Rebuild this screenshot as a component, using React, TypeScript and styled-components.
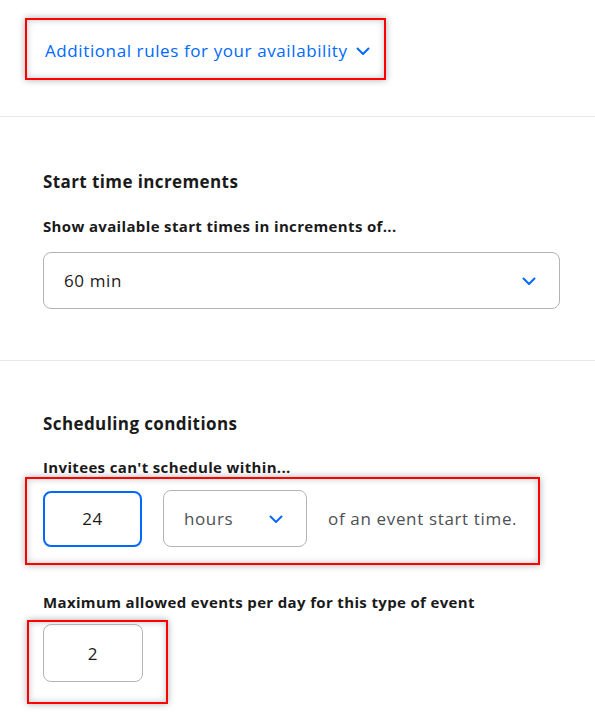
import React from "react";
import styled, { createGlobalStyle } from "styled-components";

const FONT = `"Open Sans", "Liberation Sans", sans-serif`;

const Global = createGlobalStyle`
  html, body { margin: 0; padding: 0; background: #ffffff; }
  body { font-family: ${FONT}; color: #1a1a1a; }
`;

const Page = styled.div`
  width: 595px;
  display: flex;
  flex-direction: column;
`;

const Section = styled.section<{ $pt: number; $pb: number; $last?: boolean }>`
  padding: ${(p) => p.$pt}px 35px ${(p) => p.$pb}px 43px;
  border-bottom: ${(p) => (p.$last ? "none" : "1px solid #e7e7e7")};
  display: flex;
  flex-direction: column;
  align-items: flex-start;
`;

const Highlight = styled.div<{ $ml: number; $pt: number; $pr: number; $pb: number; $pl: number; $mt?: number }>`
  margin-left: ${(p) => p.$ml}px;
  margin-top: ${(p) => p.$mt ?? 0}px;
  padding: ${(p) => `${p.$pt}px ${p.$pr}px ${p.$pb}px ${p.$pl}px`};
  border: 2px solid #ff0000;
  box-shadow: 0 0 7px rgba(0, 0, 0, 0.32), inset 0 0 7px rgba(0, 0, 0, 0.22);
  display: flex;
  align-items: center;
  gap: 21px;
`;

const LinkButton = styled.button`
  height: 55px;
  display: flex;
  align-items: center;
  gap: 8px;
  border: none;
  background: transparent;
  padding: 0;
  font-family: ${FONT};
  font-size: 17px;
  letter-spacing: 0.6px;
  color: #0069ff;
  cursor: pointer;
`;

const Title = styled.h3`
  margin: 0;
  font-size: 17px;
  line-height: 24px;
  font-weight: 700;
  letter-spacing: 0.4px;
  color: #1a1a1a;
`;

const Label = styled.div<{ $mt: number }>`
  margin-top: ${(p) => p.$mt}px;
  font-size: 15px;
  line-height: 20px;
  font-weight: 700;
  letter-spacing: 0.35px;
  color: #1a1a1a;
`;

const Select = styled.div<{ $w: number; $mt?: number }>`
  margin-top: ${(p) => p.$mt ?? 0}px;
  width: ${(p) => p.$w}px;
  height: 57px;
  box-sizing: border-box;
  border: 1px solid #b3b3b3;
  border-radius: 8px;
  display: flex;
  align-items: center;
  justify-content: space-between;
  padding: 0 23px 0 20px;
  font-size: 17px;
  letter-spacing: 0.6px;
  color: #4d5055;
`;

const SelectValue = styled.span<{ $dark?: boolean }>`
  color: ${(p) => (p.$dark ? "#1a1a1a" : "#4d5055")};
`;

const NumberBox = styled.div<{ $focused?: boolean }>`
  width: ${(p) => (p.$focused ? 99 : 100)}px;
  height: ${(p) => (p.$focused ? 56 : 58)}px;
  box-sizing: border-box;
  border: ${(p) => (p.$focused ? "2px solid #0069ff" : "1px solid #b3b3b3")};
  border-radius: 8px;
  display: flex;
  align-items: center;
  justify-content: center;
  font-size: 17px;
  letter-spacing: 0.6px;
  color: #1a1a1a;
`;

const Trailing = styled.span`
  font-size: 17px;
  letter-spacing: 0.65px;
  color: #4d5055;
`;

const Chevron = ({ size = 14 }: { size?: number }) => (
  <svg width={size} height={size} viewBox="0 0 14 14" fill="none">
    <path d="M1.5 4.5L7 10l5.5-5.5" stroke="#0069ff" strokeWidth="2" strokeLinecap="round" strokeLinejoin="round" />
  </svg>
);

const LinkWrap = styled.div`
  margin-left: 18px;
`;

export default function App() {
  return (
    <Page>
      <Global />
      <Section $pt={18} $pb={36}>
        <Highlight $ml={-18} $pt={3} $pr={14} $pb={0} $pl={0}>
          <LinkWrap>
            <LinkButton>
              Additional rules for your availability
              <Chevron />
            </LinkButton>
          </LinkWrap>
        </Highlight>
      </Section>

      <Section $pt={53} $pb={51}>
        <Title>Start time increments</Title>
        <Label $mt={22}>Show available start times in increments of...</Label>
        <Select $w={517} $mt={16}>
          <SelectValue $dark>60 min</SelectValue>
          <Chevron />
        </Select>
      </Section>

      <Section $pt={51} $pb={20} $last>
        <Title>Scheduling conditions</Title>
        <Label $mt={21}>Invitees can't schedule within...</Label>
        <Highlight $ml={-18} $pt={11} $pr={21} $pb={16} $pl={16}>
          <NumberBox $focused>24</NumberBox>
          <Select $w={144}>
            <SelectValue>hours</SelectValue>
            <Chevron />
          </Select>
          <Trailing>of an event start time.</Trailing>
        </Highlight>
        <Label $mt={27}>Maximum allowed events per day for this type of event</Label>
        <Highlight $ml={-16} $mt={8} $pt={2} $pr={23} $pb={20} $pl={14}>
          <NumberBox>2</NumberBox>
        </Highlight>
      </Section>
    </Page>
  );
}
